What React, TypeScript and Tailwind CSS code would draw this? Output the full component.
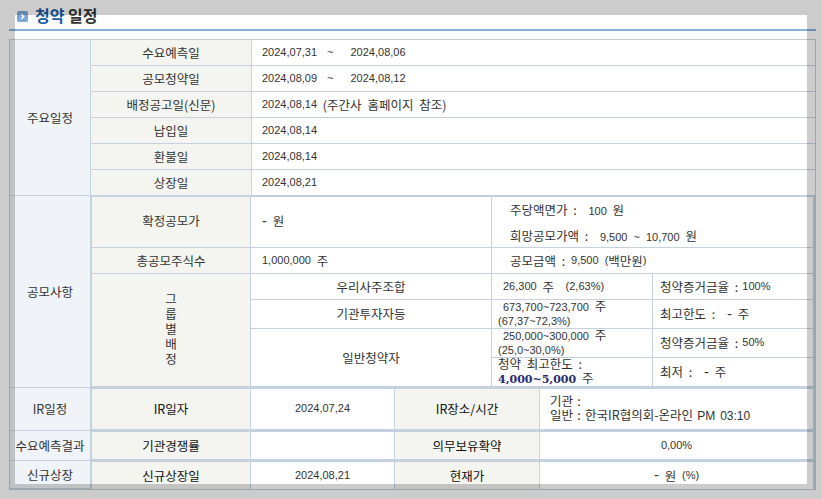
import React from "react";

// latin and digits are set smaller than hangul, the reference uses a narrow bitmap-looking face
const N = ({ children }: { children: React.ReactNode }) => (
  <span className="font-['Liberation_Sans'] text-[11px]">{children}</span>
);

// the hyphen in the reference is as wide as a digit
const Dash = () => <span className="font-['Liberation_Sans'] text-[15px] leading-[0]">-</span>;

const Gap = () => <span className="inline-block w-[4px]" />;

const Head = ({ children, bold, className = "" }: { children: React.ReactNode; bold?: boolean; className?: string }) => (
  <div className={`flex items-center justify-center bg-[#f4f5f0] pb-[1px] ${bold ? "text-[#111]" : ""} ${className}`}>{children}</div>
);

const Val = ({ children, className = "" }: { children: React.ReactNode; className?: string }) => (
  <div className={`flex items-center whitespace-pre bg-white pb-[1px] ${className}`}>{children}</div>
);

// two line cell, first line of the numbers is indented in the source
const Stack = ({ children, className = "" }: { children: React.ReactNode; className?: string }) => (
  <div className={`whitespace-pre bg-white leading-[14px] ${className}`}>{children}</div>
);

const Side = ({ children }: { children: React.ReactNode }) => (
  <div className="flex w-[80px] shrink-0 items-center justify-center border-b border-[#c4d2df] bg-[#f0f4f8] pb-[1px]">
    {children}
  </div>
);

const Range = ({ from, to }: { from: string; to: string }) => (
  <>
    <N>{from}</N>
    <span className="w-[10px]" />
    <N>~</N>
    <span className="w-[17px]" />
    <N>{to}</N>
  </>
);

const schedule: [string, React.ReactNode][] = [
  ["수요예측일", <Range from="2024,07,31" to="2024,08,06" />],
  ["공모청약일", <Range from="2024,08,09" to="2024,08,12" />],
  ["배정공고일(신문)", <><N>2024,08,14</N> (주간사 홈페이지 참조)</>],
  ["납입일", <N>2024,08,14</N>],
  ["환불일", <N>2024,08,14</N>],
  ["상장일", <N>2024,08,21</N>],
];

function Row3({ side, a, b, c, d, h, last }: { side: string; a: string; b: React.ReactNode; c: React.ReactNode; d: React.ReactNode; h: string; last?: boolean }) {
  return (
    <div className="flex">
      <Side>{side}</Side>
      <div className={`grid flex-1 grid-cols-[158px_143px_144px_1fr] gap-x-px border-x-2 border-t border-[#c4d2df] bg-[#c4d2df] ${h} ${last ? "" : "border-b-2"}`}>
        <Head bold>{a}</Head>
        <Val className="justify-center">{b}</Val>
        <Head bold>{c}</Head>
        {d}
      </div>
    </div>
  );
}

export default function App() {
  return (
    <div className="relative h-[499px] w-[822px] overflow-hidden bg-white font-['Noto_Sans_CJK_KR',sans-serif] text-[12.5px] leading-[15px] text-[#333] [word-spacing:3px]">
      <div className="flex h-[29px] items-start gap-[7px] pl-[17px] pt-[5px]">
        <span className="mt-[6px] flex h-[11px] w-[11px] items-center justify-center rounded-[2px] bg-[#7ba9d6]">
          <svg width="7" height="7" viewBox="0 0 7 7" fill="none" stroke="#fff" strokeWidth="1.4"><path d="M2.2 1l2.5 2.5L2.2 6" /></svg>
        </span>
        <h2 className="text-[16px] font-bold leading-[20px] text-[#333] [word-spacing:0]"><span className="text-[#1b5b9d]">청약</span> 일정</h2>
      </div>
      <div className="ml-[9px] h-[2px] w-[807px] bg-[#85afdc]" />

      <div className="ml-[9px] mt-[8px] h-[451px] w-[807px] border border-[#c2ccd6]">
        {/* 주요일정 */}
        <div className="flex h-[156px]">
          <div className="flex w-[81px] shrink-0 items-center justify-center border-b border-r border-[#c4d2df] bg-[#f0f4f8] pb-[1px]">주요일정</div>
          <div className="grid flex-1 grid-cols-[160px_1fr] grid-rows-[repeat(6,25px)] gap-px border-b border-[#c4d2df] bg-[#c4d2df]">
            {schedule.map(([k, v]) => (
              <React.Fragment key={k}>
                <Head>{k}</Head>
                <Val className="pl-[10px]">{v}</Val>
              </React.Fragment>
            ))}
          </div>
        </div>

        {/* 공모사항 */}
        <div className="flex h-[192px]">
          <Side>공모사항</Side>
          <div className="grid flex-1 grid-cols-[158px_240px_160px_1fr] grid-rows-[50px_25px_25px_28px_28px_28px] gap-px border-x-2 border-b-2 border-t border-[#c4d2df] bg-[#c4d2df]">
            <Head className="pb-[3px]">확정공모가</Head>
            <Val className="pb-[3px] pl-[11px]"><Dash /> 원</Val>
            <div className="col-span-2 flex flex-col gap-[9px] whitespace-pre bg-white pl-[18px] pt-[5px]">
              <div>주당액면가 :  <N>100</N> 원</div>
              <div>희망공모가액 :  <N>9,500 ~ 10,700</N> 원</div>
            </div>
            <Head>총공모주식수</Head>
            <Val className="pl-[11px]"><N>1,000,000</N> 주</Val>
            <Val className="col-span-2 pl-[18px]">공모금액 : <N>9,500 (</N>백만원<N>)</N></Val>
            <Head className="row-span-4 flex-col pb-[3px]">
              <span>그</span><span>룹</span><span>별</span><span>배</span><span>정</span>
            </Head>
            <Val className="justify-center">우리사주조합</Val>
            <Val className="pl-[11px]"><N>26,300</N> 주  <N>(2,63%)</N></Val>
            <Val className="pl-[7px]">청약증거금율 :<Gap /><N>100%</N></Val>
            <Val className="justify-center">기관투자자등</Val>
            <Stack className="pl-[6px]">
              <div className="-mt-[1px] pl-[5px]"><N>673,700~723,700</N> 주</div>
              <div className="-mt-[1px]"><N>(67,37~72,3%)</N></div>
            </Stack>
            <Val className="pl-[7px]">최고한도 :  <Dash /> 주</Val>
            <Val className="row-span-2 justify-center">일반청약자</Val>
            <Stack className="pl-[6px]">
              <div className="-mt-[1px] pl-[5px]"><N>250,000~300,000</N> 주</div>
              <div className="-mt-[1px]"><N>(25,0~30,0%)</N></div>
            </Stack>
            <Val className="pl-[7px]">청약증거금율 :<Gap /><N>50%</N></Val>
            <Stack className="pl-[6px]">
              <div className="-mt-[1px]">청약 최고한도 :</div>
              <div><b className="font-['DejaVu_Serif',serif] text-[11px] text-[#2c2c6e]">4,000~5,000</b> 주</div>
            </Stack>
            <Val className="pl-[7px]">최저 :  <Dash /> 주</Val>
          </div>
        </div>

        <Row3
          side="IR일정"
          a="IR일자"
          b={<N>2024,07,24</N>}
          c="IR장소/시간"
          d={
            <Stack className="pl-[10px] pt-[5px] [word-spacing:1.5px]">
              <div>기관 :</div>
              <div>일반 : 한국IR협의회-온라인 <span className="font-['Liberation_Sans'] text-[12px]">PM 03:10</span></div>
            </Stack>
          }
          h="h-[43px]"
        />
        <Row3 side="수요예측결과" a="기관경쟁률" b="" c="의무보유확약" d={<Val className="justify-center"><N>0,00%</N></Val>} h="h-[30px]" />
        <Row3 side="신규상장" a="신규상장일" b={<N>2024,08,21</N>} c="현재가" d={<Val className="justify-center"><Dash /> 원 <N>(%)</N></Val>} h="h-[28px]" last />
      </div>

      {/* grey frame laid over the page */}
      <div className="pointer-events-none absolute left-[15px] top-[15px] h-[469px] w-[792px] shadow-[0_0_0_900px_rgba(0,0,0,0.2)]" />
    </div>
  );
}
